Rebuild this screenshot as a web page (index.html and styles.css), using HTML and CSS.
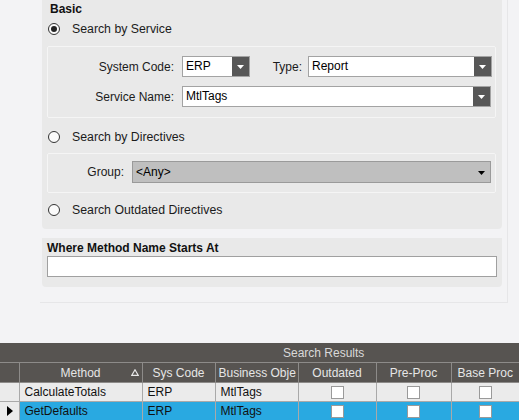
FILE: index.html
```html
<!DOCTYPE html>
<html>
<head>
<meta charset="utf-8">
<link rel="stylesheet" href="styles.css">
</head>
<body>
<div class="outer">
  <div class="box basic">
    <div class="box-title">Basic</div>
    <div class="radio-row r1"><span class="radio on"></span><span>Search by Service</span></div>
    <div class="sub sub1">
      <div class="frow">
        <span class="lbl lbl-wide">System Code:</span>
        <div class="combo w-erp"><span class="ctext">ERP</span><span class="cbtn"><svg width="7" height="4" viewBox="0 0 7 4"><path d="M0 0h7L3.5 4z" fill="#fff"/></svg></span></div>
        <span class="lbl lbl-type">Type:</span>
        <div class="combo w-type"><span class="ctext">Report</span><span class="cbtn"><svg width="7" height="4" viewBox="0 0 7 4"><path d="M0 0h7L3.5 4z" fill="#fff"/></svg></span></div>
      </div>
      <div class="frow">
        <span class="lbl lbl-wide">Service Name:</span>
        <div class="combo w-svc"><span class="ctext">MtlTags</span><span class="cbtn"><svg width="7" height="4" viewBox="0 0 7 4"><path d="M0 0h7L3.5 4z" fill="#fff"/></svg></span></div>
      </div>
    </div>
    <div class="radio-row r2"><span class="radio"></span><span>Search by Directives</span></div>
    <div class="sub sub2">
      <div class="frow">
        <span class="lbl lbl-group">Group:</span>
        <div class="combo gray w-group"><span class="ctext">&lt;Any&gt;</span><span class="gbtn"><svg width="7" height="4" viewBox="0 0 7 4"><path d="M0 0h7L3.5 4z" fill="#000"/></svg></span></div>
      </div>
    </div>
    <div class="radio-row r3"><span class="radio"></span><span>Search Outdated Directives</span></div>
  </div>
  <div class="box where">
    <div class="where-title">Where Method Name Starts At</div>
    <div class="textbox"></div>
  </div>
</div>

<div class="grid">
  <div class="band">Search Results</div>
  <table class="gtable">
    <colgroup>
      <col class="c0"><col class="c1"><col class="c2"><col class="c3"><col class="c4"><col class="c5"><col class="c6">
    </colgroup>
    <tr class="hdr">
      <th class="ind-h"></th>
      <th class="th-method">Method<svg class="sort" width="8" height="7" viewBox="0 0 8 7"><path d="M4 0.8L7.2 6.3H0.8z" fill="none" stroke="#e8e8e8" stroke-width="1.2"/></svg></th>
      <th>Sys Code</th>
      <th class="th-left">Business Obje</th>
      <th>Outdated</th>
      <th>Pre-Proc</th>
      <th>Base Proc</th>
    </tr>
    <tr class="row">
      <td class="ind"></td>
      <td>CalculateTotals</td>
      <td>ERP</td>
      <td>MtlTags</td>
      <td class="cc"><span class="chk"></span></td>
      <td class="cc"><span class="chk"></span></td>
      <td class="cc"><span class="chk"></span></td>
    </tr>
    <tr class="row sel">
      <td class="ind"><svg width="6" height="10" viewBox="0 0 6 10"><path d="M0 0L6 5L0 10z" fill="#000"/></svg></td>
      <td>GetDefaults</td>
      <td>ERP</td>
      <td>MtlTags</td>
      <td class="cc"><span class="chk"></span></td>
      <td class="cc"><span class="chk"></span></td>
      <td class="cc"><span class="chk"></span></td>
    </tr>
  </table>
</div>
</body>
</html>
```

FILE: styles.css
```css
html, body {
  margin: 0;
  padding: 0;
}
body {
  background: #f3f3f5;
  font-family: "Liberation Sans", Arial, sans-serif;
  font-size: 12px;
  color: #1b1b1b;
  width: 519px;
  height: 420px;
  overflow: hidden;
}
.outer {
  margin-left: 40px;
  width: 464px;
  padding: 0 1px 15px 2px;
  border-right: 1px solid #e6e6e8;
  border-bottom: 1px solid #e6e6e8;
}
.box {
  background: #e9e9e9;
  width: 460px;
  border-radius: 0 0 4px 4px;
  box-sizing: border-box;
}
.basic {
  padding: 0 6px 10px 5px;
}
.box-title {
  height: 18px;
  line-height: 18px;
  padding-left: 3px;
  font-weight: bold;
  color: #111;
}
.radio-row {
  display: flex;
  align-items: center;
  height: 18px;
  padding-left: 1px;
  gap: 12px;
  font-size: 12.3px;
}
.r1 { margin-top: 2px; }
.r2 { margin-top: 10px; }
.r3 { margin-top: 8px; }
.radio {
  width: 10px;
  height: 10px;
  border: 1px solid #333;
  border-radius: 50%;
  background: #fafafa;
  position: relative;
  flex: none;
}
.radio.on::after {
  content: "";
  position: absolute;
  left: 2px;
  top: 2px;
  width: 6px;
  height: 6px;
  border-radius: 50%;
  background: #222;
}
.sub {
  border: 1px solid #f5f5f5;
  border-radius: 2px;
  box-sizing: border-box;
}
.sub1 {
  margin-top: 8px;
  height: 72px;
  padding: 9px 4px 0 0;
  display: flex;
  flex-direction: column;
  gap: 9px;
}
.sub2 {
  margin-top: 7px;
  height: 40px;
  padding: 7px 4px 0 0;
}
.frow {
  display: flex;
  align-items: center;
  height: 21px;
}
.sub2 .frow { height: 22px; }
.lbl {
  text-align: right;
  flex: none;
}
.lbl-wide { width: 126px; margin-right: 8px; }
.lbl-type { width: 52px; margin-right: 6px; }
.lbl-group { width: 76px; margin-right: 8px; }
.combo {
  display: flex;
  height: 21px;
  box-sizing: border-box;
  border: 1px solid #a3a3a3;
  background: #fff;
  flex: none;
}
.combo .ctext {
  flex: 1;
  padding-left: 3px;
  line-height: 19px;
  color: #000;
}
.cbtn {
  width: 17px;
  background: #575757;
  display: flex;
  align-items: center;
  justify-content: center;
}
.w-erp { width: 68px; }
.w-type { width: 184px; }
.w-svc { width: 309px; }
.combo.gray {
  background: #bfbfbf;
  border-color: #9a9a9a;
  height: 22px;
}
.combo.gray .ctext { line-height: 20px; }
.w-group { width: 359px; }
.gbtn {
  width: 18px;
  display: flex;
  align-items: center;
  justify-content: center;
  padding-top: 1px;
}
.where {
  margin-top: 9px;
  height: 49px;
  padding: 2px 5px 0 5px;
}
.where-title {
  font-weight: bold;
  color: #111;
  height: 16px;
  line-height: 16px;
}
.textbox {
  height: 21px;
  width: 450px;
  box-sizing: border-box;
  border: 1px solid #a0a0a0;
  background: #fff;
}
.grid {
  margin-top: 40px;
  width: 519px;
}
.band {
  height: 20px;
  line-height: 20px;
  background: #575451;
  color: #d9d9d9;
  padding-left: 283px;
  box-sizing: border-box;
  border-bottom: 1px solid #8d8b89;
}
.gtable {
  border-collapse: collapse;
  table-layout: fixed;
  width: 519px;
}
.c0 { width: 19px; }
.c1 { width: 123px; }
.c2 { width: 73px; }
.c3 { width: 83px; }
.c4 { width: 78px; }
.c5 { width: 75px; }
.c6 { width: 68px; }
.hdr th {
  background: #575451;
  color: #e6e6e6;
  font-weight: normal;
  height: 19px;
  padding: 0;
  border-left: 1px solid #8d8b89;
  border-bottom: 1px solid #8d8b89;
  white-space: nowrap;
  overflow: hidden;
  text-align: center;
}
.hdr th.ind-h { border-left: none; }
.th-method { position: relative; }
.sort { position: absolute; right: 3px; top: 6px; }
.hdr th.th-left { text-align: left; padding-left: 3px; }
.row td {
  height: 18px;
  padding: 0 0 0 5px;
  background: #ebebeb;
  border-left: 1px solid #a9a9a9;
  border-bottom: 1px solid #a9a9a9;
  white-space: nowrap;
  overflow: hidden;
  color: #111;
}
.row td.ind {
  padding: 0;
  border-left: none;
  background: #ebebeb;
  text-align: center;
  vertical-align: middle;
}
.row td.ind svg { display: block; margin: 0 auto 0 7px; }
.row td.cc {
  padding: 0;
  text-align: center;
}
.chk {
  display: inline-block;
  width: 11px;
  height: 11px;
  border: 1px solid #9a9a9a;
  background: #fff;
  vertical-align: middle;
}
.row.sel td {
  background: #29a9e1;
  border-top: 1px dotted #222;
  border-bottom: 1px dotted #222;
}
.row.sel td.ind {
  background: #ebebeb;
  border-top: 1px solid #a9a9a9;
  border-bottom: none;
}
```
